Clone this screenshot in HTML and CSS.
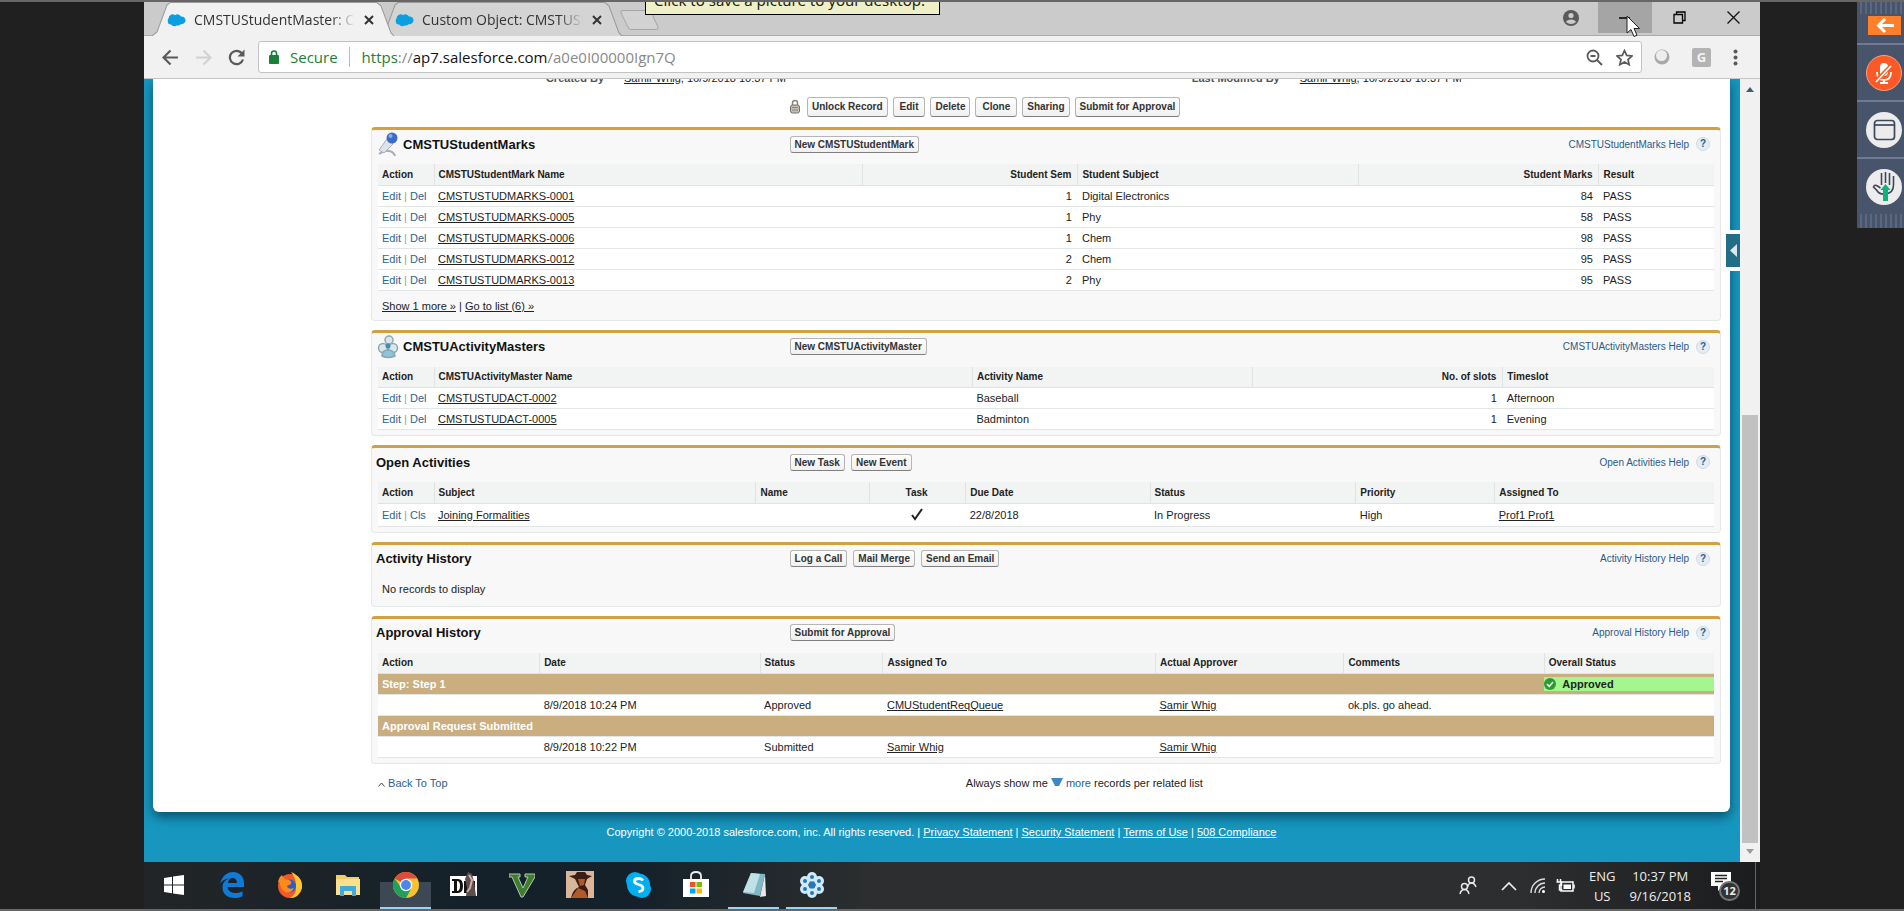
FILE: index.html
```html
<!DOCTYPE html>
<html lang="en">
<head>
<meta charset="utf-8">
<title>CMSTUStudentMaster</title>
<link rel="stylesheet" href="styles.css">
</head>
<body>
<svg width="0" height="0" class="defs" aria-hidden="true">
  <symbol id="cloud" viewBox="0 0 19 14"><path fill="#0b9fdf" d="M8 2.2A4 4 0 0 1 14 3.4 4.4 4.4 0 0 1 18.6 7.200A4.300 4.300 0 0 1 13.500 11.200 3.400 3.400 0 0 1 9.700 12.400 3.800 3.800 0 0 1 4.200 11.400 3.300 3.300 0 0 1 .8 8 3.400 3.400 0 0 1 1.600 5.200 3.900 3.900 0 0 1 8 2.200Z"/></symbol>
  <symbol id="x" viewBox="0 0 10 10"><path d="M1 1l8 8M9 1L1 9" stroke="#333" stroke-width="2"/></symbol>
</svg>
<div class="desktop">
  <div class="screen">
    <header class="tabstrip">
      <div class="tab active">
        <svg class="shape" viewBox="0 0 242 33" preserveAspectRatio="none"><path d="M0 33L5 29 15 3 18 0H225L229 4 239 30 242 33Z" fill="#f1f1f1"/><path d="M0 33L5 29 15 3 18 .5H225L229 4 239 30 242 33" fill="none" stroke="#999"/></svg>
        <svg class="fav"><use href="#cloud"/></svg><span class="name">CMSTUStudentMaster: CMSTU</span>
        <button class="close" aria-label="Close tab"><svg width="10" height="10"><use href="#x"/></svg></button>
      </div>
      <div class="tab">
        <svg class="shape" viewBox="0 0 242 33" preserveAspectRatio="none"><path d="M0 33L5 29 15 3 18 .5H225L229 4 239 30 242 33" fill="#d4d4d4" stroke="#999"/></svg>
        <svg class="fav"><use href="#cloud"/></svg><span class="name">Custom Object: CMSTUStud</span>
        <button class="close" aria-label="Close tab"><svg width="10" height="10"><use href="#x"/></svg></button>
      </div>
      <button class="newtab" aria-label="New tab"><svg width="40" height="20"><path d="M3 .5H28Q30 .5 31 2L38 17Q39 19.500 36 19.500H11Q9 19.500 8 17L1 3Q0 .5 3 .5Z" fill="#d2d2d2" stroke="#a6a6a6"/></svg></button>
      <div class="winbtns">
        <button class="wb" aria-label="Profile"><svg width="18" height="18"><circle cx="9" cy="9" r="8" fill="#5a5a5a"/><circle cx="9" cy="6.500" r="2.600" fill="#cbcbcb"/><path d="M4 13Q5 10.500 9 10.500T14 13Q12 15 9 15T4 13Z" fill="#cbcbcb"/></svg></button>
        <button class="wb min" aria-label="Minimize"><svg width="12" height="12"><path d="M0 6h11" stroke="#000" stroke-width="1.500"/></svg></button>
        <button class="wb" aria-label="Restore"><svg width="13" height="13"><path d="M1 3.500h8.500V12H1ZM3.500 3.500V1H12v8.500H9.500" fill="none" stroke="#000" stroke-width="1.300"/></svg></button>
        <button class="wb" aria-label="Close"><svg width="13" height="13"><path d="M.5 .5l12 12M12.500 .5l-12 12" stroke="#111" stroke-width="1.300"/></svg></button>
      </div>
    </header>
    <div class="toolbar">
      <button class="nav" aria-label="Back"><svg width="17" height="17"><path d="M16 8.500H2M8.500 1.500l-7 7 7 7" fill="none" stroke="#5a5a5a" stroke-width="2.200"/></svg></button>
      <button class="nav" aria-label="Forward"><svg width="17" height="17"><path d="M1 8.500H15M8.500 1.500l7 7-7 7" fill="none" stroke="#d2d2d2" stroke-width="2.200"/></svg></button>
      <button class="nav" aria-label="Reload"><svg width="17" height="17"><path d="M14 4.500A6.700 6.700 0 1 0 15 10.500" fill="none" stroke="#5a5a5a" stroke-width="2.200"/><path d="M16.500 .5V7.500H9.500Z" fill="#5a5a5a"/></svg></button>
      <div class="address">
        <svg width="11" height="14"><rect y="5" width="10" height="9" rx="1" fill="#188038"/><path d="M2.500 6V3.500a2.500 2.500 0 0 1 5 0V6" fill="none" stroke="#188038" stroke-width="1.600"/></svg>
        <span class="secure">Secure</span><span class="bar"></span>
        <span class="url"><span class="scheme">https</span><span class="dim">://</span>ap7.salesforce.com<span class="dim">/a0e0I00000Ign7Q</span></span>
        <svg width="17" height="17"><circle cx="7" cy="7" r="5.500" fill="none" stroke="#5a5a5a" stroke-width="1.800"/><path d="M4.500 7h5M11 11l5 5" stroke="#5a5a5a" stroke-width="1.800"/></svg>
        <svg class="star" width="17" height="17"><path d="M8.500 1.500l2.200 4.900 5.300.5-4 3.600 1.200 5.200-4.700-2.800-4.700 2.800L5 10.500 1 6.900l5.300-.5Z" fill="none" stroke="#5a5a5a" stroke-width="1.700"/></svg>
      </div>
      <div class="exts">
        <svg width="16" height="16"><circle cx="8" cy="8" r="7.500" fill="#a9a9a9"/><circle cx="7.500" cy="6.500" r="5.500" fill="#ededed"/></svg>
        <span class="gbox">G</span>
        <svg width="5" height="17" fill="#5a5a5a"><circle cx="2.500" cy="2.500" r="2"/><circle cx="2.500" cy="8.500" r="2"/><circle cx="2.500" cy="14.500" r="2"/></svg>
      </div>
    </div>

    <div class="view">
      <div class="site">
        <main class="sheet">
          <div class="audit">
            <div class="pair"><span class="lbl">Created By</span><span><a href="#">Samir Whig</a>, 16/9/2018 10:37 PM</span></div>
            <div class="pair"><span class="lbl">Last Modified By</span><span><a href="#">Samir Whig</a>, 16/9/2018 10:37 PM</span></div>
          </div>
          <div class="actions">
            <svg width="10" height="15"><path d="M2.500 7V4a2.500 2.500 0 0 1 5 0v3" fill="none" stroke="#8b8680" stroke-width="1.500"/><rect x=".5" y="6" width="9" height="8" rx="2" fill="#c3beb6" stroke="#77716a"/><path d="M2 8.500h6M2 11h6" stroke="#8b8680"/></svg>
            <button>Unlock Record</button><button class="pad">Edit</button><button>Delete</button><button class="pad">Clone</button><button>Sharing</button><button>Submit for Approval</button>
          </div>

          <section class="card">
            <div class="head">
              <h2><svg width="22" height="26"><path d="M2 23Q7 19 12 20T18 25" fill="none" stroke="#aab" stroke-width="2"/><path d="M10 8l6 5-9 9-5-3Z" fill="#dfe3ec" stroke="#a8aebc"/><circle cx="15" cy="7" r="5.500" fill="#3c6cc4"/><circle cx="13.500" cy="5" r="2" fill="#88aeea"/></svg>CMSTUStudentMarks</h2>
              <div class="btns"><button>New CMSTUStudentMark</button></div>
              <a class="help" href="#">CMSTUStudentMarks Help<i>?</i></a>
            </div>
            <table>
              <colgroup><col class="a"><col style="width:32.1%"><col style="width:16.1%"><col style="width:21%"><col style="width:18%"><col></colgroup>
              <tr><th>Action</th><th>CMSTUStudentMark Name</th><th class="r">Student Sem</th><th>Student Subject</th><th class="r">Student Marks</th><th>Result</th></tr>
              <tr><td class="act"><a href="#">Edit</a> | <a href="#">Del</a></td><td><a href="#">CMSTUSTUDMARKS-0001</a></td><td class="r">1</td><td>Digital Electronics</td><td class="r">84</td><td>PASS</td></tr>
              <tr><td class="act"><a href="#">Edit</a> | <a href="#">Del</a></td><td><a href="#">CMSTUSTUDMARKS-0005</a></td><td class="r">1</td><td>Phy</td><td class="r">58</td><td>PASS</td></tr>
              <tr><td class="act"><a href="#">Edit</a> | <a href="#">Del</a></td><td><a href="#">CMSTUSTUDMARKS-0006</a></td><td class="r">1</td><td>Chem</td><td class="r">98</td><td>PASS</td></tr>
              <tr><td class="act"><a href="#">Edit</a> | <a href="#">Del</a></td><td><a href="#">CMSTUSTUDMARKS-0012</a></td><td class="r">2</td><td>Chem</td><td class="r">95</td><td>PASS</td></tr>
              <tr><td class="act"><a href="#">Edit</a> | <a href="#">Del</a></td><td><a href="#">CMSTUSTUDMARKS-0013</a></td><td class="r">2</td><td>Phy</td><td class="r">95</td><td>PASS</td></tr>
            </table>
            <div class="more"><a href="#">Show 1 more »</a> | <a href="#">Go to list (6) »</a></div>
          </section>

          <section class="card">
            <div class="head">
              <h2><svg width="22" height="26"><g fill="#dce6ea" stroke="#8fa6b0" stroke-width="1.500"><circle cx="12" cy="6" r="4"/><circle cx="6" cy="14" r="4.500"/><circle cx="16" cy="14" r="4.500"/><path d="M5 22Q5 16 11 16T18 22Q11 25 5 22Z" fill="#8cc4dc"/></g><circle cx="11" cy="12" r="2.500" fill="#3f8fb5"/></svg>CMSTUActivityMasters</h2>
              <div class="btns"><button>New CMSTUActivityMaster</button></div>
              <a class="help" href="#">CMSTUActivityMasters Help<i>?</i></a>
            </div>
            <table>
              <colgroup><col class="a"><col style="width:40.3%"><col style="width:21%"><col style="width:18.7%"><col></colgroup>
              <tr><th>Action</th><th>CMSTUActivityMaster Name</th><th>Activity Name</th><th class="r">No. of slots</th><th>Timeslot</th></tr>
              <tr><td class="act"><a href="#">Edit</a> | <a href="#">Del</a></td><td><a href="#">CMSTUSTUDACT-0002</a></td><td>Baseball</td><td class="r">1</td><td>Afternoon</td></tr>
              <tr><td class="act"><a href="#">Edit</a> | <a href="#">Del</a></td><td><a href="#">CMSTUSTUDACT-0005</a></td><td>Badminton</td><td class="r">1</td><td>Evening</td></tr>
            </table>
          </section>

          <section class="card">
            <div class="head">
              <h2>Open Activities</h2>
              <div class="btns"><button>New Task</button><button>New Event</button></div>
              <a class="help" href="#">Open Activities Help<i>?</i></a>
            </div>
            <table class="tall">
              <colgroup><col class="a"><col style="width:24.1%"><col style="width:8.5%"><col style="width:7.2%"><col style="width:13.8%"><col style="width:15.4%"><col style="width:10.4%"><col></colgroup>
              <tr><th>Action</th><th>Subject</th><th>Name</th><th class="c">Task</th><th>Due Date</th><th>Status</th><th>Priority</th><th>Assigned To</th></tr>
              <tr><td class="act"><a href="#">Edit</a> | <a href="#">Cls</a></td><td><a href="#">Joining Formalities</a></td><td></td><td class="c"><svg width="14" height="13"><path d="M2 7l3 4L12 1" fill="none" stroke="#222" stroke-width="2"/></svg></td><td>22/8/2018</td><td>In Progress</td><td>High</td><td><a href="#">Prof1 Prof1</a></td></tr>
            </table>
          </section>

          <section class="card">
            <div class="head">
              <h2>Activity History</h2>
              <div class="btns"><button>Log a Call</button><button>Mail Merge</button><button>Send an Email</button></div>
              <a class="help" href="#">Activity History Help<i>?</i></a>
            </div>
            <p class="none">No records to display</p>
          </section>

          <section class="card">
            <div class="head">
              <h2>Approval History</h2>
              <div class="btns"><button>Submit for Approval</button></div>
              <a class="help" href="#">Approval History Help<i>?</i></a>
            </div>
            <table>
              <colgroup><col style="width:12.1%"><col style="width:16.5%"><col style="width:9.2%"><col style="width:20.4%"><col style="width:14.1%"><col style="width:15%"><col></colgroup>
              <tr><th>Action</th><th>Date</th><th>Status</th><th>Assigned To</th><th>Actual Approver</th><th>Comments</th><th>Overall Status</th></tr>
              <tr class="step"><td colspan="6">Step: Step 1</td><td class="state"><div class="ok"><svg width="12" height="12"><circle cx="6" cy="6" r="6" fill="#2f9a35"/><path d="M3 6l2.200 2.500L9 4" fill="none" stroke="#dff5d8" stroke-width="1.600"/></svg>Approved</div></td></tr>
              <tr><td></td><td>8/9/2018 10:24 PM</td><td>Approved</td><td><a href="#">CMUStudentReqQueue</a></td><td><a href="#">Samir Whig</a></td><td>ok.pls. go ahead.</td><td></td></tr>
              <tr class="step"><td colspan="7">Approval Request Submitted</td></tr>
              <tr><td></td><td>8/9/2018 10:22 PM</td><td>Submitted</td><td><a href="#">Samir Whig</a></td><td><a href="#">Samir Whig</a></td><td></td><td></td></tr>
            </table>
          </section>

          <div class="end">
            <a href="#"><svg width="7" height="5"><path d="M.5 4.500l3-3.500 3 3.500" fill="none" stroke="#444"/></svg> Back To Top</a>
            <span>Always show me <svg width="12" height="9"><path d="M0 0h12L8 8H4Z" fill="#3f86c6"/></svg> <a href="#">more</a> records per related list</span>
          </div>
        </main>
        <button class="drawer" aria-label="Open sidebar"><svg width="7" height="13"><path d="M7 0v13L0 6.500Z" fill="#dbe9ee"/></svg></button>
        <footer>Copyright © 2000-2018 salesforce.com, inc. All rights reserved. | <a href="#">Privacy Statement</a> | <a href="#">Security Statement</a> | <a href="#">Terms of Use</a> | <a href="#">508 Compliance</a></footer>
      </div>
      <div class="scroll"><svg width="8" height="5"><path d="M0 5h8L4 0Z" fill="#3f5f70"/></svg><div class="track"><div class="thumb"></div></div><svg width="8" height="5"><path d="M0 0h8L4 5Z" fill="#9a9a9a"/></svg></div>
    </div>

    <div class="taskbar">
      <div class="apps">
        <button aria-label="Start"><svg width="20" height="20" fill="#fff"><path d="M0 3l8-1.200V9.500H0ZM9 1.600L20 0v9.500H9ZM0 10.500h8v7.700L0 17ZM9 10.500h11V20L9 18.400Z"/></svg></button>
        <button aria-label="Edge"><svg width="26" height="26"><path fill="#0f7ad8" d="M1 12C3 4 8 0 14 0c7 0 11 5 11 11v4H8.500c.5 4 4 6 8 6 3 0 5-.7 7-1.800v5C21 25.500 18.500 26 16 26 8.500 26 3.500 22 3.500 15.500 3.500 11 6 8 10 6.500 5 7 2.500 9.500 1 12ZM9 11h9c0-3-1.500-5-4.300-5S9.300 8 9 11Z"/></svg></button>
        <button aria-label="Firefox"><svg width="26" height="26"><circle cx="13" cy="14" r="12" fill="#f4572a"/><path d="M14 0Q26 5 25 16 22 26 13 26 20 22 19 14 19 6 14 0Z" fill="#ffc72c"/><circle cx="12.500" cy="14" r="6.500" fill="#2b5bd0"/><path d="M1 10Q2 5 5 3 6 7 12 8 15 9 14 12L10 14Q11 18 17 16 14 22 8 20 3 17 3 11Z" fill="#ff8a1c"/></svg></button>
        <button aria-label="File Explorer"><svg width="26" height="24"><path d="M1 2h9l2 2h12v18H1Z" fill="#f2cf63"/><path d="M1 6h24v16H1Z" fill="#fbe08d"/><path d="M5 13h16v10h-4v-5H9v5H5Z" fill="#3fa9e0"/></svg></button>
        <button class="cur run" aria-label="Chrome"><svg width="26" height="26"><circle cx="13" cy="13" r="13" fill="#f9c22e"/><path d="M13 13L1.700 6.500A13 13 0 0 1 24.300 6.500H13Z" fill="#dd4b3e"/><path d="M1.700 6.500A13 13 0 0 0 13 26l5-9-5-1.500-5 0Z" fill="#21a05a"/><circle cx="13" cy="13" r="6.200" fill="#fff"/><circle cx="13" cy="13" r="4.900" fill="#4a86ee"/></svg></button>
        <button aria-label="Game"><svg width="28" height="27"><rect y="5" width="27" height="20" fill="#fff"/><path d="M2 8h6q5 0 5 7t-5 7H2v-2h2V10H2ZM7 10v10q3 0 3-5T7 10Z" fill="#111"/><path d="M14 10h4v12h-4ZM21 10h4v12h-4Z" fill="#111"/><path d="M15 8l3-7 4 2 2 8 2 14H16l1-8Z" fill="#5a4d4f"/><path d="M19 4l3 5-2 8-3 4" stroke="#d8a9a4" stroke-width="2" fill="none"/></svg></button>
        <button aria-label="Vim"><svg width="26" height="26"><path d="M0 2h11v3H9l5 11 5-11h-3V2h10v3L14 25h-2L3 5H0Z" fill="#3f7d2f" stroke="#b9c7b3"/></svg></button>
        <button aria-label="Western game"><svg width="28" height="27"><rect width="28" height="27" fill="#d9b69a"/><path d="M3 5l6-1 2-3h8l2 3 5 1-5 3-2 6 3 5v8H5q2-9 8-11L9 8Z" fill="#3c1d14"/><path d="M12 8h7l-1 6-4 1ZM5 27l7-10 7 3 3 7Z" fill="#b0592b"/></svg></button>
        <button aria-label="Skype"><svg width="26" height="26"><rect x="1" y="0" width="18" height="18" rx="9" fill="#00aff0"/><rect x="8" y="8" width="18" height="18" rx="9" fill="#00aff0"/><circle cx="13.500" cy="13" r="11.500" fill="#00aff0"/><path d="M18 8.500Q16.500 6.500 13.500 6.500 9.500 6.500 9.500 9.500C9.500 13.500 18 11.500 18 16 18 19.500 13.500 19.500 13.500 19.500 10.500 19.500 8.800 17" fill="none" stroke="#fff" stroke-width="2.800"/></svg></button>
        <button aria-label="Store"><svg width="28" height="27"><path d="M1 8h26v18H1Z" fill="#fff"/><path d="M9 9V5q0-4 5-4t5 4v4" fill="none" stroke="#eee" stroke-width="1.800"/><path d="M8 11h5.500v5H8Z" fill="#f25022"/><path d="M14.500 11H20v5h-5.500Z" fill="#7fba00"/><path d="M8 17.500h5.500v5H8Z" fill="#00a4ef"/><path d="M14.500 17.500H20v5h-5.500Z" fill="#ffb900"/></svg></button>
        <button class="run" aria-label="Notepad"><svg width="26" height="26"><path d="M10 1l14 1-5 22-17-3Z" fill="#7fb9c6"/><path d="M10 1l9 1-6 19-11-1Z" fill="#bfe0e6"/><path d="M24 2l1 22-6 1Z" fill="#e8e8e8"/></svg></button>
        <button class="run" aria-label="Meeting"><svg width="26" height="26"><g fill="#cfeaf8"><circle cx="13" cy="5" r="5"/><circle cx="13" cy="21" r="5"/><circle cx="6" cy="9" r="5"/><circle cx="20" cy="9" r="5"/><circle cx="6" cy="17" r="5"/><circle cx="20" cy="17" r="5"/></g><g fill="#2777b8"><circle cx="13" cy="5" r="2"/><circle cx="13" cy="21" r="2"/><circle cx="6" cy="9" r="2"/><circle cx="20" cy="9" r="2"/><circle cx="6" cy="17" r="2"/><circle cx="20" cy="17" r="2"/><circle cx="13" cy="13" r="3.500"/></g></svg></button>
      </div>
      <div class="tray">
        <svg width="18" height="19" fill="none" stroke="#e8e8e8" stroke-width="1.500"><circle cx="12.500" cy="4" r="3"/><path d="M8.500 11q1-4 4-4t4.500 4"/><circle cx="5.500" cy="10.500" r="3"/><path d="M1 18q1-4.500 4.500-4.500T10 18"/></svg>
        <svg class="chev" width="16" height="10"><path d="M1 9l7-7 7 7" fill="none" stroke="#eee" stroke-width="1.700"/></svg>
        <svg width="17" height="16" fill="none" stroke="#ddd" stroke-width="1.400"><path d="M1 15A14 14 0 0 1 15 1M5 15A10 10 0 0 1 15 5M9 15A6 6 0 0 1 15 9"/><circle cx="13.500" cy="13.500" r="1.500" fill="#fff" stroke="none"/></svg>
        <svg class="batt" width="20" height="14"><rect x="5" y="3" width="12" height="9" fill="none" stroke="#fff" stroke-width="1.500"/><path d="M7.500 5.500h7.500V10H7.500Z" fill="#fff"/><path d="M18 5.500v4M1.500 0v3M4.500 0v3M.5 3h5v3h-2v5h3" stroke="#fff" stroke-width="1.500" fill="none"/></svg>
        <div class="two">ENG<br>US</div>
        <div class="two time">10:37 PM<br>9/16/2018</div>
        <div class="note"><svg width="20" height="19"><path d="M0 0h20v14H12l-5 5v-5H0Z" fill="#fff"/><path d="M4 3.500h12M4 6.500h12M4 9.500h8" stroke="#222" stroke-width="1.400"/></svg><span class="count">12</span></div>
      </div>
    </div>
  </div>

  <div class="tip">Click to save a picture to your desktop.</div>
  <svg class="cursor" width="15" height="23"><path d="M1 1v17l4-3.500 3 7 3-1.300-3-6.700h5.500Z" fill="#fff" stroke="#222"/></svg>
  <aside class="rail">
    <div class="hatch"></div>
    <button class="cell first" aria-label="Collapse"><svg width="33" height="19"><rect width="33" height="19" fill="#ff7f2a"/><path d="M26 9.500H11M17 3l-6.500 6.500L17 16" fill="none" stroke="#fff" stroke-width="3"/></svg></button>
    <button class="cell" aria-label="Unmute"><svg width="36" height="36"><circle cx="18" cy="18" r="17.500" fill="#fb5a26" stroke="#ffa07c"/><rect x="14" y="8" width="8" height="13" rx="4" fill="#fff"/><path d="M11 17q0 8 7 8t7-8M18 25v3M14 28h8" fill="none" stroke="#fff" stroke-width="1.800"/><path d="M10 26L26 10" stroke="#fb5a26" stroke-width="4"/><path d="M10 27L25 11" stroke="#fff" stroke-width="1.800"/></svg></button>
    <button class="cell" aria-label="Window"><svg width="36" height="36"><circle cx="18" cy="18" r="18" fill="#ececec"/><rect x="8.500" y="8.500" width="20" height="19" rx="3" fill="none" stroke="#3e485c" stroke-width="1.700"/><path d="M8.500 13h20" stroke="#3e485c" stroke-width="1.700"/></svg></button>
    <button class="cell" aria-label="Raise hand"><svg width="36" height="36"><circle cx="18" cy="18" r="18" fill="#ececec"/><path d="M15.500 4v12M19.500 3v11M23.500 4v12M27.500 7v9q0 8-8 9-6 1-9-4l-3-3q1-3 4-1l3 2" fill="none" stroke="#3e485c" stroke-width="1.600"/><path d="M19.500 15l5 6H22v11h-5V21h-2.500Z" fill="#0db37c"/></svg></button>
    <div class="hatch"></div>
  </aside>
</div>
</body>
</html>
```
FILE: styles.css
```css
* { box-sizing: border-box; }
body { margin: 0; background: #202020; font-family: "Liberation Sans", Arial, sans-serif; font-size: 11px; color: #222; }
button { font: inherit; color: inherit; border: 0; padding: 0; background: none; }
a { color: inherit; }
svg { flex: none; }
.defs { position: absolute; }
.desktop { position: relative; height: 100vh; padding: 0 144px; border-top: 2px solid #666; border-bottom: 2px solid #666; overflow: hidden; }
.screen { display: flex; flex-direction: column; height: 100%; background: #1797c0; }

.tabstrip { display: flex; height: 34px; padding-left: 8px; background: #cbcbcb; border-bottom: 1px solid #aaa; font: 14px "Open Sans", sans-serif; color: #333; flex: none; }
.tab { position: relative; display: flex; align-items: center; width: 242px; padding: 2px 20px 0 15px; margin-right: -14px; z-index: 1; }
.tab.active { z-index: 2; }
.tab .shape { position: absolute; left: 0; top: 0; width: 100%; height: 34px; z-index: -1; }
.fav { width: 19px; height: 14px; margin-right: 8px; }
.name { flex: 1; overflow: hidden; white-space: nowrap; mask-image: linear-gradient(90deg, #000 85%, transparent); }
.close { display: flex; margin-left: 9px; }
.newtab { margin: 8px 0 0 12px; display: flex; align-items: flex-start; }
.winbtns { margin-left: auto; display: flex; }
.wb { width: 54px; display: grid; place-items: center; height: 31px; }
.wb.min { background: #a5a5a5; }

.toolbar { display: flex; align-items: center; height: 43px; background: #f1f1f1; border-bottom: 1px solid #c4c4c4; padding: 0 22px 0 18px; flex: none; font: 15px "Open Sans", sans-serif; }
.nav { display: flex; margin-right: 16px; }
.address { flex: 1; display: flex; align-items: center; height: 32px; margin: 0 12px 0 -3px; padding: 0 8px 0 10px; background: #fff; border: 1px solid #c2c2c2; border-radius: 3px; }
.secure { color: #188038; margin: 0 11px 0 10px; }
.bar { width: 1px; height: 20px; background: #bbb; margin-right: 12px; }
.url { flex: 1; color: #111; }
.scheme { color: #188038; }
.dim { color: #888; }
.star { margin-left: 13px; }
.exts { display: flex; align-items: center; gap: 22px; }
.gbox { width: 19px; height: 19px; background: #b3b3b3; color: #f4f4f4; font: bold 13px/19px "Open Sans", sans-serif; text-align: center; border-radius: 2px; }

.view { flex: 1; display: flex; min-height: 0; overflow: hidden; }
.site { position: relative; flex: 1; padding: 0 10px 0 9px; overflow: hidden; }
.sheet { background: #fff; padding: 0 9px 21px 218px; border-radius: 0 0 6px 6px; box-shadow: 0 5px 12px #0a4f68; }
.audit { display: grid; grid-template-columns: 53% 1fr; height: 17px; padding-left: 75px; line-height: 14px; }
.audit .pair { display: grid; grid-template-columns: 158px 1fr; column-gap: 20px; margin-top: -8px; }
.lbl { text-align: right; font-weight: bold; color: #555; }
.actions { display: flex; align-items: center; gap: 5px; height: 21px; padding-left: 419px; margin-bottom: 10px; }
.actions svg { margin-right: 2px; }
.actions button { height: 20px; }
.actions button, .btns button { padding: 0 4px; border: 1px solid #b5b5b5; border-bottom-color: #7f7f7f; border-radius: 3px; background: linear-gradient(#fff, #f0f0f0); color: #333; font-size: 10px; font-weight: bold; }
.actions button.pad { padding: 0 6px; }
.card { background: #f8f8f8; border: 1px solid #e4e8e8; border-top: 3px solid #d1a143; border-radius: 4px; padding: 0 6px 5px; margin-bottom: 9px; }
.head { display: grid; grid-template-columns: 31% 1fr auto; align-items: center; height: 34px; margin: 0 4px 0 -2px; padding-bottom: 6px; }
.head h2 { display: flex; align-items: center; gap: 4px; margin: 0; font-size: 13px; color: #111; }
.head h2 svg { margin-left: 1px; }
.btns { display: flex; gap: 6px; }
.btns button { height: 17px; }
.help { display: flex; align-items: center; gap: 7px; font-size: 10px; color: #2a5a8a; text-decoration: none; }
.help i { width: 14px; height: 14px; border: 1px solid #cfdbe4; border-radius: 7px; background: #e3edf4; font: bold 10px/12px "Liberation Sans", sans-serif; text-align: center; color: #2f5f87; }
table { width: 100%; table-layout: fixed; border-collapse: collapse; background: #fff; }
col.a { width: 56px; }
tr { height: 21px; }
.tall tr:last-child { height: 23px; }
th { background: #f2f3f3; text-align: left; font-size: 10px; font-weight: bold; color: #222; border-left: 1px solid #dfe3e4; border-bottom: 1px solid #dfe3e4; padding: 0 6px 0 4px; }
th:first-child { border-left: 0; }
td { border-bottom: 1px solid #e3e6e6; padding: 0 6px 0 4px; white-space: nowrap; }
td svg { vertical-align: middle; }
.r { text-align: right; }
.c { text-align: center; }
.act { color: #999; padding-right: 0; }
.act a { color: #2a6496; text-decoration: none; }
.more { padding: 8px 4px 0; height: 24px; line-height: 14px; }
.none { margin: 0; padding-left: 4px; line-height: 20px; height: 22px; }
.step td { height: 21px; background: #caae80; color: #fff; font-weight: bold; }
td.state { padding: 0; }
.ok { display: flex; align-items: center; gap: 6px; height: 14px; background: #a2f78f; color: #222; }
.end { display: grid; grid-template-columns: 44% 1fr; padding: 2px 7px 0; line-height: 16px; }
.end a { color: #1f6190; text-decoration: none; }
.drawer { position: absolute; right: 0; top: 151px; width: 18px; height: 41px; background: #236d87; border: 4px solid #fff; border-right: 0; border-radius: 4px 0 0 4px; display: grid; place-items: center; }
footer { text-align: center; color: #fff; padding-top: 12px; line-height: 16px; }
.scroll { width: 20px; background: #f1f1f1; display: flex; flex-direction: column; align-items: center; padding: 8px 0; }
.track { flex: 1; width: 16px; padding-top: 323px; margin-bottom: 6px; }
.thumb { height: 100%; background: #c1c1c1; }

.taskbar { display: flex; justify-content: space-between; height: 47px; background: linear-gradient(90deg, #222527, #14212a 20%, #14212a 30%, #2c2e2f 45%, #2c2e2f 85%, #1b1c1d); flex: none; }
.apps { display: flex; gap: 7px; padding-left: 4px; }
.apps button { width: 51px; display: grid; place-items: center; border-bottom: 2px solid transparent; }
.apps .cur { background: linear-gradient(#0000 20px, #3c4853 20px); }
.apps .run { border-bottom-color: #9bd3f5; }
.tray { display: flex; align-items: center; color: #eee; font: 13px/20px "Open Sans", sans-serif; margin-right: 4px; padding-right: 14px; border-right: 1px solid #666; }
.chev { margin: 0 13px 0 24px; }
.batt { margin: 0 13px 0 9px; }
.two { text-align: center; }
.time { margin: 0 20px 0 14px; }
.note { position: relative; width: 30px; height: 28px; }
.count { position: absolute; left: 8px; top: 9px; width: 21px; height: 20px; border: 2px solid #777; border-radius: 10px; background: #333; font: bold 11px/16px "Open Sans", sans-serif; text-align: center; }

.tip { position: absolute; left: 645px; top: -13px; z-index: 5; padding: 0 14px 0 8px; height: 26px; background: #f0f0c8; border: 1px solid #000; font: 15px/20px "Noto Sans", sans-serif; color: #222; }
.cursor { position: absolute; right: 263px; top: 13px; z-index: 5; }
.rail { position: absolute; right: 0; top: -2px; width: 47px; background: #48546a; }
.hatch { height: 14px; background: repeating-linear-gradient(90deg, #48546a 0 3px, #5a6780 3px 5px); }
.cell { display: grid; place-items: center; width: 100%; height: 57px; padding-left: 7px; border-top: 2px solid #6d7a92; }
.cell.first { height: 29px; border-top: 0; padding: 0 0 6px 8px; }
```
